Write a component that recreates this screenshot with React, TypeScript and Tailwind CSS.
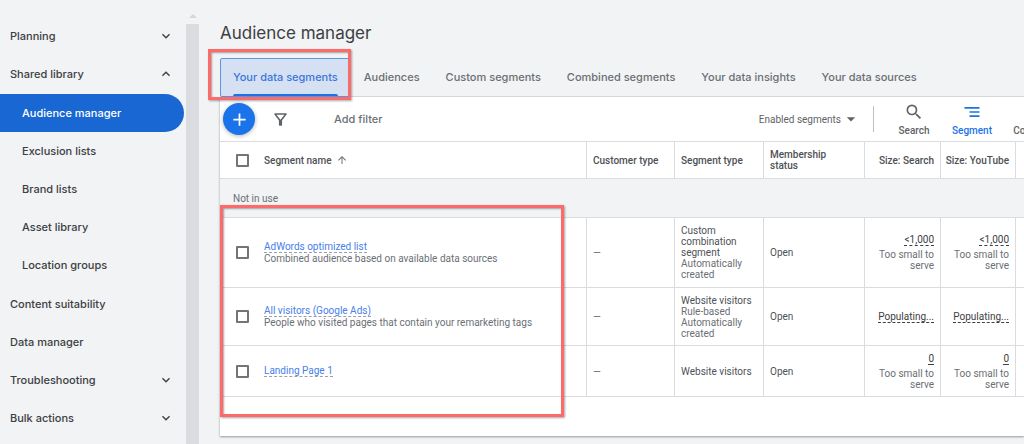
import { clsx } from "clsx";
import {
  MdAdd,
  MdArrowDropDown,
  MdArrowUpward,
  MdExpandLess,
  MdExpandMore,
  MdOutlineFilterAlt,
  MdSearch,
  MdSegment,
  MdViewColumn,
} from "react-icons/md";

interface NavEntry {
  label: string;
  open?: boolean;
  children?: string[];
}

interface Size {
  value: string;
  note?: string;
}

interface Segment {
  name: string;
  description?: string;
  type: string;
  typeNotes: string[];
  status: string;
  size: Size;
  height: string;
}

const NAV: NavEntry[] = [
  { label: "Planning", open: false },
  {
    label: "Shared library",
    open: true,
    children: [
      "Audience manager",
      "Exclusion lists",
      "Brand lists",
      "Asset library",
      "Location groups",
    ],
  },
  { label: "Content suitability" },
  { label: "Data manager" },
  { label: "Troubleshooting", open: false },
  { label: "Bulk actions", open: false },
];

const TABS = [
  "Your data segments",
  "Audiences",
  "Custom segments",
  "Combined segments",
  "Your data insights",
  "Your data sources",
];

const SEGMENTS: Segment[] = [
  {
    name: "AdWords optimized list",
    description: "Combined audience based on available data sources",
    type: "Custom combination segment",
    typeNotes: ["Automatically created"],
    status: "Open",
    size: { value: "<1,000", note: "Too small to serve" },
    height: "h-[70px]",
  },
  {
    name: "All visitors (Google Ads)",
    description: "People who visited pages that contain your remarketing tags",
    type: "Website visitors",
    typeNotes: ["Rule-based", "Automatically created"],
    status: "Open",
    size: { value: "Populating..." },
    height: "h-[58px]",
  },
  {
    name: "Landing Page 1",
    type: "Website visitors",
    typeNotes: [],
    status: "Open",
    size: { value: "0", note: "Too small to serve" },
    height: "h-[51px]",
  },
];

function Highlight({ className }: { className: string }) {
  return (
    <span
      aria-hidden="true"
      className={clsx(
        "pointer-events-none absolute z-10 border-3 border-[#fd6a6a] shadow-[1px_1px_2px_rgba(0,0,0,0.35),inset_1px_1px_2px_rgba(0,0,0,0.35)]",
        className,
      )}
    />
  );
}

function Sidebar() {
  return (
    <nav className="w-[186px] shrink-0 pt-[17px] text-[11px] font-medium text-[#3c4043]">
      {NAV.map((entry) => (
        <div key={entry.label}>
          {entry.open === undefined ? (
            <a href="#" className="flex h-[38px] items-center pl-[10px]">
              {entry.label}
            </a>
          ) : (
            <button
              type="button"
              aria-expanded={entry.open}
              className="flex h-[38px] w-full items-center justify-between pr-3 pl-[10px]"
            >
              {entry.label}
              {entry.open ? <MdExpandLess size={16} /> : <MdExpandMore size={16} />}
            </button>
          )}
          {entry.children && (
            <ul className="my-px pr-[2px]">
              {entry.children.map((child, i) => (
                <li key={child}>
                  <a
                    href="#"
                    className={clsx(
                      "flex h-[38px] items-center rounded-r-full pl-[22px]",
                      i === 0 && "bg-[#1967d2] text-white",
                    )}
                  >
                    {child}
                  </a>
                </li>
              ))}
            </ul>
          )}
        </div>
      ))}
    </nav>
  );
}

function ScrollTrack() {
  return (
    <div className="flex w-[13px] shrink-0 flex-col items-center pt-[14px]" aria-hidden="true">
      <svg width="8" height="4" viewBox="0 0 8 4" className="mb-[6px] shrink-0">
        <path d="M4 0 8 4H0z" fill="#d5d7da" />
      </svg>
      <div className="w-full flex-1 bg-[#dadce0]" />
    </div>
  );
}

function Toolbar() {
  return (
    <div className="flex h-[45px] items-center border-b border-[#dadce0] pl-[3px]">
      <button
        type="button"
        aria-label="New segment"
        className="flex size-8 shrink-0 items-center justify-center rounded-full bg-[#1a73e8] text-white shadow-[0_1px_4px_rgba(60,64,67,0.4)]"
      >
        <MdAdd size={21} />
      </button>
      <button type="button" aria-label="Filter" className="ml-4 text-[#5f6368]">
        <MdOutlineFilterAlt size={19} />
      </button>
      <button type="button" className="ml-11 text-[11px] font-medium text-[#6b6f74]">
        Add filter
      </button>
      <div className="ml-auto flex shrink-0 items-center font-[Roboto,sans-serif] text-[#5f6368]">
        <button type="button" className="flex items-center text-[10px]">
          Enabled segments
          <MdArrowDropDown size={20} />
        </button>
        <span className="mr-[15px] ml-3 h-[26px] w-px bg-[#bdc1c6]" />
        <button type="button" className="flex w-[50px] flex-col items-center pt-[2px] text-[10px] leading-[17px] font-medium">
          <MdSearch size={20} />
          Search
        </button>
        <button type="button" className="ml-2 flex w-[50px] flex-col items-center pt-[2px] text-[10px] leading-[17px] font-medium text-[#1a73e8]">
          <MdSegment size={20} />
          Segment
        </button>
        <button type="button" className="-mr-[34px] ml-[11px] flex w-[50px] flex-col items-center pt-[2px] text-[10px] leading-[17px] font-medium">
          <MdViewColumn size={20} className="text-[#dadce0]" />
          Columns
        </button>
      </div>
    </div>
  );
}

function SizeCell({ size }: { size: Size }) {
  return (
    <td className="border-r border-[#dadce0] px-[6px] text-right">
      <span className="inline-block border-b border-dashed border-[#3c4043] text-[#3c4043]">{size.value}</span>
      {size.note && <span className="mt-[3px] block">{size.note}</span>}
    </td>
  );
}

function SegmentTable() {
  return (
    <table className="w-full table-fixed border-separate border-spacing-0 font-[Roboto,sans-serif] text-[10px] leading-[11px] text-[#6b6f74]">
      <colgroup>
        <col className="w-[44px]" />
        <col />
        <col className="w-[88px]" />
        <col className="w-[89px]" />
        <col className="w-[101px]" />
        <col className="w-[76px]" />
        <col className="w-[75px]" />
        <col className="w-2" />
      </colgroup>
      <thead>
        <tr className="h-[37px] text-left text-[#4d5156] *:border-b *:border-[#dadce0] *:font-medium">
          <th className="pl-4">
            <input
              type="checkbox"
              aria-label="Select all segments"
              className="block size-[13px] appearance-none rounded-[1px] border-2 border-[#757575]"
            />
          </th>
          <th className="border-r">
            <span className="flex items-center gap-1">
              Segment name
              <MdArrowUpward size={12} className="text-[#757575]" />
            </span>
          </th>
          <th className="border-r px-[6px]">Customer type</th>
          <th className="border-r px-[6px]">Segment type</th>
          <th className="border-r pr-6 pl-[6px]">Membership status</th>
          <th className="border-r pr-[6px] text-right">Size: Search</th>
          <th className="border-r pr-[6px] text-right">Size: YouTube</th>
          <td />
        </tr>
      </thead>
      <tbody>
        <tr className="h-[39px] bg-[#f1f3f4]">
          <td colSpan={8} className="border-b border-[#dadce0] pl-[13px]">
            Not in use
          </td>
        </tr>
        {SEGMENTS.map((segment) => (
          <tr key={segment.name} className={clsx("*:border-b *:border-[#dadce0]", segment.height)}>
            <td className="pl-4">
              <input
                type="checkbox"
                aria-label={segment.name}
                className="block size-[13px] appearance-none rounded-[1px] border-2 border-[#757575]"
              />
            </td>
            <td className="border-r">
              <a href="#" className="inline-block border-b border-dashed border-[#9aa0a6] text-[#4780ea]">
                {segment.name}
              </a>
              {segment.description && <p>{segment.description}</p>}
            </td>
            <td className="border-r px-[6px]">—</td>
            <td className="border-r px-[6px]">
              <p className="text-[#4d5156]">{segment.type}</p>
              {segment.typeNotes.map((note) => (
                <p key={note}>{note}</p>
              ))}
            </td>
            <td className="border-r px-[6px] text-[#4d5156]">{segment.status}</td>
            <SizeCell size={segment.size} />
            <SizeCell size={segment.size} />
            <td />
          </tr>
        ))}
      </tbody>
    </table>
  );
}

export default function App() {
  return (
    <div className="flex min-h-screen overflow-hidden bg-[#f1f3f4] font-[Inter,sans-serif]">
      <Sidebar />
      <ScrollTrack />
      <main className="min-w-0 flex-1 overflow-hidden pt-5 pl-[21px]">
        <h1 className="mb-3 text-[17px] leading-[26px] text-[#3c4043]">Audience manager</h1>
        <div role="tablist" className="flex h-[39px] border-b border-[#dadce0] text-[11px] font-medium text-[#6b6f74]">
          {TABS.map((tab, i) =>
            i === 0 ? (
              <button
                key={tab}
                type="button"
                role="tab"
                aria-selected="true"
                className="relative h-[39px] shrink-0 rounded-[2px] border border-[#5b95e9] bg-[#d5e1f3] px-3 text-[#3b76da]"
              >
                {tab}
                <span className="absolute inset-x-3 bottom-0 h-[2px] rounded-t-sm bg-[#1a73e8]" />
                <Highlight className="-top-[10px] -right-px -bottom-[4px] -left-[13px]" />
              </button>
            ) : (
              <button key={tab} type="button" role="tab" aria-selected="false" className="shrink-0 px-[13px]">
                {tab}
              </button>
            ),
          )}
        </div>
        <section className="bg-white pb-[39px] shadow-[0_1px_2px_rgba(60,64,67,0.5)]">
          <Toolbar />
          <div className="relative">
            <SegmentTable />
            <Highlight className="top-[63px] left-0 h-[212px] w-[344px]" />
          </div>
        </section>
      </main>
    </div>
  );
}
